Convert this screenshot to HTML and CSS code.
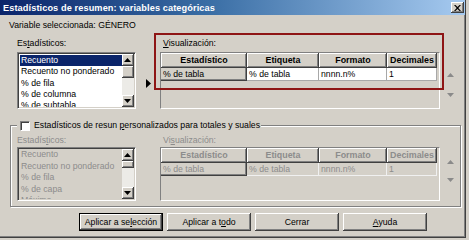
FILE: index.html
```html
<!DOCTYPE html>
<html lang="es">
<head>
<meta charset="utf-8">
<title>Estadísticos de resumen</title>
<link rel="stylesheet" href="styles.css">
</head>
<body>
<div class="window">
  <div class="titlebar">
    <span class="title">Estadísticos de resumen: variables categóricas</span>
    <span class="close">
      <svg width="7" height="6" viewBox="0 0 7 6"><path d="M0 0h1.5l2 2 2-2H7L4.3 3 7 6H5.5l-2-2-2 2H0l2.7-3z" fill="#000"/></svg>
    </span>
  </div>

  <div class="selected">Variable seleccionada: GÉNERO</div>

  <div class="section top">
    <div class="leftcol">
      <div class="label">Es<u>t</u>adísticos:</div>
      <div class="listbox">
        <ul class="items">
          <li class="sel">Recuento</li>
          <li>Recuento no ponderado</li>
          <li>% de fila</li>
          <li>% de columna</li>
          <li>% de subtabla</li>
        </ul>
        <div class="scroll">
          <div class="sbtn"><svg width="7" height="4" viewBox="0 0 7 4"><path d="M3.5 0L7 4H0z" fill="#000"/></svg></div>
          <div class="thumb"></div>
          <div class="track"></div>
          <div class="sbtn"><svg width="7" height="4" viewBox="0 0 7 4"><path d="M0 0h7L3.5 4z" fill="#000"/></svg></div>
        </div>
      </div>
    </div>
    <div class="arrowcol">
      <svg class="move" width="5" height="9" viewBox="0 0 5 9"><path d="M0 0L5 4.5 0 9z" fill="#000"/></svg>
    </div>
    <div class="rightcol">
      <div class="label vis"><u>V</u>isualización:</div>
      <div class="panel">
        <div class="grid">
          <div class="th">Estadístico</div>
          <div class="th">Etiqueta</div>
          <div class="th">Formato</div>
          <div class="th">Decimales</div>
          <div class="td first">% de tabla</div>
          <div class="td">% de tabla</div>
          <div class="td">nnnn.n%</div>
          <div class="td">1</div>
        </div>
      </div>
    </div>
    <div class="updown">
      <svg width="7" height="4" viewBox="0 0 7 4"><path d="M3.5 0L7 4H0z" fill="#8a8a8a"/></svg>
      <svg width="7" height="4" viewBox="0 0 7 4"><path d="M0 0h7L3.5 4z" fill="#8a8a8a"/></svg>
    </div>
    <div class="highlight"></div>
  </div>

  <fieldset class="group">
    <legend class="legend"><span class="checkbox"></span><span>Estadísticos de resun <u>p</u>ersonalizados para totales y suales</span></legend>
    <div class="section bottom">
      <div class="leftcol">
        <div class="label dis">Estadís<u>t</u>icos:</div>
        <div class="listbox disabled">
          <ul class="items">
            <li>Recuento</li>
            <li>Recuento no ponderado</li>
            <li>% de fila</li>
            <li>% de capa</li>
            <li>Máximo</li>
          </ul>
          <div class="scroll">
            <div class="sbtn"><svg width="7" height="4" viewBox="0 0 7 4"><path d="M3.5 0L7 4H0z" fill="#000"/></svg></div>
            <div class="thumb small"></div>
            <div class="track"></div>
            <div class="sbtn"><svg width="7" height="4" viewBox="0 0 7 4"><path d="M0 0h7L3.5 4z" fill="#000"/></svg></div>
          </div>
        </div>
      </div>
      <div class="arrowcol"></div>
      <div class="rightcol">
        <div class="label dis vis">Vi<u>s</u>ualización:</div>
        <div class="panel">
          <div class="grid disabled">
            <div class="th">Estadístico</div>
            <div class="th">Etiqueta</div>
            <div class="th">Formato</div>
            <div class="th">Decimales</div>
            <div class="td first">% de tabla</div>
            <div class="td">% de tabla</div>
            <div class="td">nnnn.n%</div>
            <div class="td">1</div>
          </div>
        </div>
      </div>
      <div class="updown low">
        <svg width="7" height="4" viewBox="0 0 7 4"><path d="M3.5 0L7 4H0z" fill="#8a8a8a"/></svg>
        <svg width="7" height="4" viewBox="0 0 7 4"><path d="M0 0h7L3.5 4z" fill="#8a8a8a"/></svg>
      </div>
    </div>
  </fieldset>

  <div class="buttons">
    <button class="btn default">Aplicar a se<u>l</u>ección</button>
    <button class="btn">Aplicar a t<u>o</u>do</button>
    <button class="btn">Cerrar</button>
    <button class="btn"><u>A</u>yuda</button>
  </div>
</div>
</body>
</html>
```

FILE: styles.css
```css
* { box-sizing: border-box; }
html, body { margin: 0; padding: 0; }
body {
  width: 469px;
  height: 240px;
  overflow: hidden;
  background: #d4d0c8;
  font-family: "Liberation Sans", Arial, sans-serif;
  font-size: 8.7px;
  color: #000;
}
u { text-decoration: underline; text-underline-offset: 1px; }

.window {
  width: 466px;
  height: 238px;
  background: #d4d0c8;
  border-right: 1px solid #404040;
  border-bottom: 1px solid #404040;
  box-shadow: inset -1px -1px 0 #808080;
  position: relative;
}

/* title bar */
.titlebar {
  height: 15px;
  display: flex;
  align-items: center;
  padding: 0 1px 0 3px;
  background: linear-gradient(to right, #0a246a 0%, #3a6ea5 45%, #a6caf0 100%);
}
.title {
  color: #fff;
  font-weight: bold;
  font-size: 9.2px;
  letter-spacing: 0.1px;
}
.close {
  margin-left: auto;
  width: 13px;
  height: 11px;
  display: flex;
  align-items: center;
  justify-content: center;
  background: #d4d0c8;
  box-shadow: inset -1px -1px 0 #404040, inset 1px 1px 0 #fff, inset -2px -2px 0 #808080;
}

.selected {
  margin: 5px 0 0 9px;
  height: 11px;
  line-height: 11px;
}

/* sections */
.section { display: flex; position: relative; }
.top { margin-top: 4px; height: 74px; }
.leftcol { width: 119px; }
.top .leftcol { margin-left: 17px; }
.label { height: 17px; line-height: 17px; }
.label.vis { padding-left: 3px; }
.bottom .label { height: 16px; padding-top: 3px; line-height: 13px; }
.label.dis { color: #8c8c8c; }

.listbox {
  height: 57px;
  display: flex;
  background: #fff;
  border: 1px solid;
  border-color: #808080 #fff #fff #808080;
  box-shadow: inset 1px 1px 0 #404040, inset -1px -1px 0 #d4d0c8;
  padding: 1px;
}
.bottom .listbox { height: 54px; }
.listbox.disabled { background: #d4d0c8; }
.items {
  list-style: none;
  margin: 0;
  padding: 1px 0 0 1px;
  flex: 1;
  overflow: hidden;
  white-space: nowrap;
}
.items li {
  height: 11.3px;
  line-height: 11.3px;
  padding-left: 1px;
}
.items li.sel { background: #0a246a; color: #fff; }
.disabled .items { padding-top: 0; }
.disabled .items li { color: #8c8c8c; height: 11.6px; line-height: 11.6px; }

.scroll {
  width: 12px;
  display: flex;
  flex-direction: column;
}
.sbtn, .thumb {
  background: #d4d0c8;
  box-shadow: inset -1px -1px 0 #404040, inset 1px 1px 0 #fff, inset -2px -2px 0 #808080;
}
.sbtn {
  height: 12px;
  display: flex;
  align-items: center;
  justify-content: center;
}
.sbtn svg { margin: 0 1px 1px 0; }
.thumb { height: 12px; }
.thumb.small { height: 7px; }
.track { flex: 1; background: #ecebe7; }

.arrowcol { width: 24px; }
.move { margin: 44px 0 0 10px; display: block; }

.rightcol { width: 280px; }
.panel {
  height: 57px;
  border: 1px solid;
  border-color: #808080 #fff #fff #808080;
}
.bottom .panel { height: 54px; }

.grid {
  display: grid;
  grid-template-columns: 86px 72px 68px 50px;
  grid-template-rows: 15px 13px;
}
.th {
  background: #d4d0c8;
  font-weight: bold;
  text-align: center;
  line-height: 15px;
  font-size: 8.9px;
  box-shadow: inset -1px -1px 0 #404040, inset 1px 1px 0 #fff, inset -2px -2px 0 #808080;
}
.td {
  background: #fff;
  line-height: 12px;
  padding-left: 2px;
  border-right: 1px solid #a8a8a8;
  border-bottom: 1px solid #a8a8a8;
  white-space: nowrap;
}
.td.first {
  background: #d4d0c8;
  border-right: 1px solid #404040;
  border-bottom: 1px solid #404040;
  box-shadow: inset -1px -1px 0 #808080;
}
.grid.disabled .th { color: #8c8c8c; }
.grid.disabled .td { background: #d4d0c8; color: #8c8c8c; border-color: #f0f0f0; }
.grid.disabled .td.first { border-color: #404040; }

.updown {
  margin-left: 7px;
  display: flex;
  flex-direction: column;
  gap: 16px;
  padding-top: 38px;
}
.updown.low { padding-top: 29px; gap: 14px; }

.highlight {
  position: absolute;
  left: 154px;
  top: -2px;
  width: 290px;
  height: 57px;
  border: 2px solid #8e1515;
  pointer-events: none;
}

/* group */
.group {
  margin: 11px 0 0 10px;
  width: 451px;
  padding: 0 6px 5px 6px;
  border: 1px solid #808080;
  box-shadow: inset 1px 1px 0 #fff, 1px 1px 0 #fff;
  min-width: 0;
}
.legend {
  display: flex;
  align-items: center;
  gap: 4px;
  height: 11px;
  line-height: 11px;
  padding: 0 1px 0 3px;
  background: #d4d0c8;
}
.checkbox {
  width: 10px;
  height: 10px;
  background: #fff;
  border: 1px solid;
  border-color: #808080 #fff #fff #808080;
  box-shadow: inset 1px 1px 0 #404040;
}

/* buttons */
.buttons {
  display: flex;
  gap: 4px;
  margin: 6px 0 0 79px;
}
.btn {
  width: 84px;
  height: 18px;
  padding: 0;
  font-family: "Liberation Sans", Arial, sans-serif;
  font-size: 8.7px;
  color: #000;
  background: #d4d0c8;
  border: none;
  box-shadow: inset -1px -1px 0 #404040, inset 1px 1px 0 #fff, inset -2px -2px 0 #808080;
}
.btn.default {
  border: 1px solid #000;
}
```
